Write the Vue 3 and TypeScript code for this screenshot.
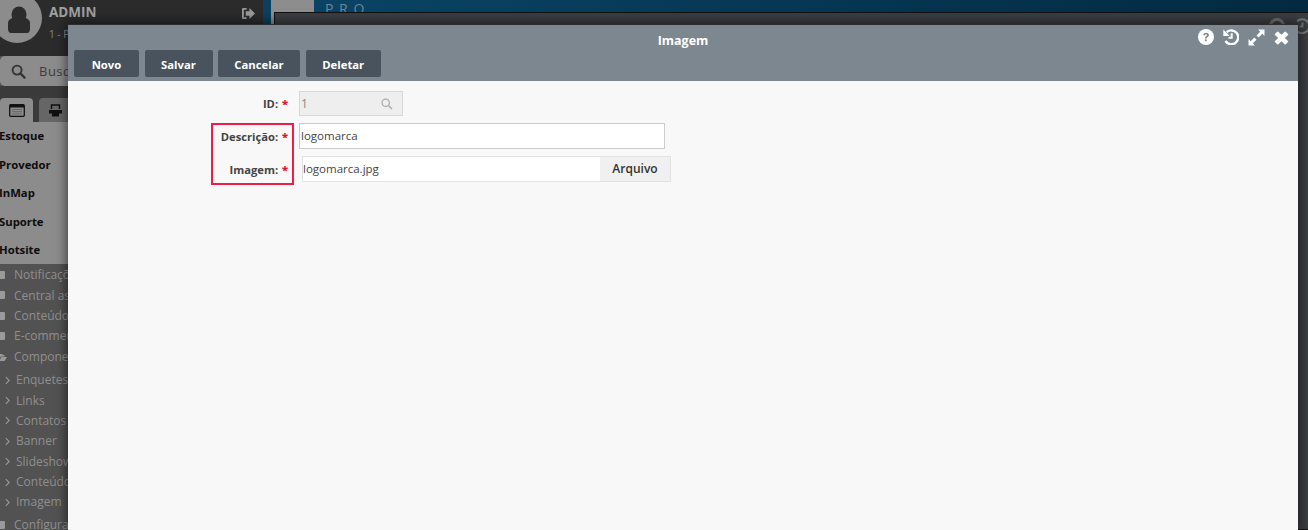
<script setup lang="ts">
const tools = ['Novo', 'Salvar', 'Cancelar', 'Deletar']
const sections = ['Estoque', 'Provedor', 'InMap', 'Suporte', 'Hotsite']
const topItems = ['Notificações', 'Central as', 'Conteúdo', 'E-commerce']
const subItems = ['Enquetes', 'Links', 'Contatos', 'Banner', 'Slideshow', 'Conteúdo', 'Imagem']
</script>

<template>
  <div class="page">
    <aside class="sidebar">
      <div class="profile">
        <svg class="avatar" viewBox="0 0 42 44" width="42" height="44">
          <circle cx="17" cy="18" r="25" fill="#8c8c8c" />
          <ellipse cx="19" cy="14.500" rx="7.500" ry="8" fill="#2c2c2c" />
          <path d="M8 29v-6c0-3 3-5 6-5h10c3 0 6 2 6 5v6c0 2-1 4-3 4H11c-2 0-3-2-3-4z" fill="#2c2c2c" />
        </svg>
        <div class="who">
          <strong>ADMIN</strong>
          <span>1 - Provedor</span>
        </div>
        <svg class="logout" viewBox="0 0 16 14" width="15" height="13">
          <path d="M6 1H2.500C1.500 1 1 1.700 1 2.500v9C1 12.300 1.500 13 2.500 13H6v-2H3V3h3z" fill="#9a9a9a" />
          <path d="M5 4.500h4V1l6 6-6 6V9.500H5z" fill="#9a9a9a" />
        </svg>
      </div>
      <div class="search">
        <svg viewBox="0 0 16 16" width="15" height="15">
          <circle cx="6.500" cy="6.500" r="4.800" fill="none" stroke="#333" stroke-width="2" />
          <path d="M10 10l4.500 4.500" stroke="#333" stroke-width="2.400" stroke-linecap="round" />
        </svg>
        <span>Busque</span>
      </div>
      <div class="tabs">
        <div class="tab active">
          <svg viewBox="0 0 16 13" width="16" height="13">
            <rect x="0.700" y="0.700" width="14.600" height="11.600" rx="1" fill="#8c8c8c" stroke="#111" stroke-width="1.300" />
            <rect x="1" y="1" width="14" height="2.500" fill="#111" />
            <path d="M3 5.500h10M3 7.700h10M3 9.900h10" stroke="#666" stroke-width="1" />
          </svg>
        </div>
        <div class="tab">
          <svg viewBox="0 0 15 13" width="15" height="13">
            <path d="M3.500 5V1h8v4" fill="none" stroke="#111" stroke-width="1.500" />
            <path d="M1 6h13v3.500H1zM4 9h7v3.500H4z" fill="#111" />
          </svg>
        </div>
      </div>
      <div class="sections">
        <div v-for="s in sections" :key="s" class="section">{{ s }}</div>
      </div>
      <ul class="tree">
        <li v-for="t in topItems" :key="t" class="node"><i class="sq"></i>{{ t }}</li>
        <li class="node folder">
          <svg class="open" viewBox="0 0 8 7" width="8" height="7"><path d="M0 1.500C0 .500.500 0 1 0h2l1 1h1.500v1.500H2L0 5.500zM2.500 3H8L5.500 7H0z" fill="#9a9a9a" /></svg>
          <span>Componentes</span>
        </li>
        <li v-for="s in subItems" :key="s" class="sub">
          <svg viewBox="0 0 6 10" width="5" height="9"><path d="M1 1l4 4-4 4" fill="none" stroke="#999" stroke-width="1.300" /></svg>
          <span>{{ s }}</span>
        </li>
        <li class="node last"><i class="sq"></i>Configurações</li>
      </ul>
    </aside>

    <main class="back">
      <div class="stripe"></div>
      <div class="white"></div>
      <div class="brand">P.R.O.</div>
      <div class="backwin">
        <svg viewBox="0 0 16 16" width="16" height="16">
          <circle cx="8" cy="8" r="6.500" fill="none" stroke="#6e6e6e" stroke-width="3" />
        </svg>
        <svg viewBox="0 0 16 16" width="16" height="16">
          <path d="M3.200 3.200A7 7 0 1 1 2 11.500" fill="none" stroke="#777" stroke-width="2" />
          <path d="M8.500 4.500v4H5.500" fill="none" stroke="#777" stroke-width="1.800" />
        </svg>
      </div>
    </main>

    <section class="modal">
      <header class="head">
        <div class="title">Imagem</div>
        <div class="controls">
          <svg viewBox="0 0 16 16" width="16" height="16">
            <circle cx="8" cy="8" r="8" fill="#fff" />
            <path d="M5.300 6.200C5.400 4.600 6.600 3.800 8.100 3.800c1.600 0 2.800.9 2.800 2.300 0 1.200-.7 1.700-1.500 2.200-.6.400-.8.600-.8 1.200H6.900c0-1.200.4-1.800 1.200-2.300.6-.4 1-.6 1-1.100 0-.5-.4-.8-1-.8-.7 0-1.100.4-1.200 1z" fill="#7d8790" />
            <rect x="6.900" y="10.400" width="1.800" height="1.800" fill="#7d8790" />
          </svg>
          <svg viewBox="0 0 16 16" width="16" height="16">
            <path d="M3.700 3.200A6.900 6.900 0 1 1 2.500 12" fill="none" stroke="#fff" stroke-width="2.400" />
            <path d="M0.300 0.500v6.500h6.500z" fill="#fff" />
            <path d="M8.700 4.200v4.600H5.500" fill="none" stroke="#fff" stroke-width="2" />
          </svg>
          <svg viewBox="0 0 16 16" width="17" height="17">
            <path d="M9.500 0.500h6V6.500L13.500 4.500 10 8 8 6 11.500 2.500zM6.500 15.500H0.500V9.500L2.500 11.500 6 8 8 10 4.500 13.500z" fill="#fff" />
          </svg>
          <svg class="close" viewBox="0 0 15 14" width="15" height="14">
            <path d="M1.500 3.500L3.800 1.200 7.500 4.900 11.200 1.200 13.500 3.500 9.800 7 13.500 10.500 11.200 12.800 7.500 9.100 3.800 12.800 1.500 10.500 5.200 7z" fill="#fff" stroke="#fff" stroke-width="1.500" stroke-linejoin="round" />
          </svg>
        </div>
        <div class="toolbar">
          <button v-for="t in tools" :key="t" class="tool" type="button">{{ t }}</button>
        </div>
      </header>
      <div class="body">
        <div class="row id-row">
          <label class="label">ID: <b>*</b></label>
          <div class="id-field">
            <span>1</span>
            <svg viewBox="0 0 14 14" width="12" height="12">
              <circle cx="5.500" cy="5.500" r="4.300" fill="none" stroke="#aaa" stroke-width="1.400" />
              <path d="M8.800 8.800l4 4" stroke="#aaa" stroke-width="1.800" />
            </svg>
          </div>
        </div>
        <div class="row desc-row">
          <label class="label">Descrição: <b>*</b></label>
          <div class="text-field">logomarca</div>
        </div>
        <div class="row img-row">
          <label class="label">Imagem: <b>*</b></label>
          <div class="file-field">
            <span class="file-name">logomarca.jpg</span>
            <span class="file-btn">Arquivo</span>
          </div>
        </div>
        <div class="highlight"></div>
      </div>
    </section>
  </div>
</template>

<style>
html, body { margin: 0; background: #f8f8f8; overflow: hidden; }
</style>

<style scoped>
.page {
  position: relative;
  display: flex;
  width: 1308px;
  height: 530px;
  overflow: hidden;
  font-family: "Open Sans", "Liberation Sans", sans-serif;
}
.sidebar {
  width: 263px;
  flex: none;
  background: #525252;
  display: flex;
  flex-direction: column;
  color: #999;
}
.profile {
  height: 56px;
  flex: none;
  background: #2b2b2b;
  display: flex;
  position: relative;
}
.avatar { flex: none; }
.who { margin-left: 7px; display: flex; flex-direction: column; }
.who strong { font-size: 13.500px; line-height: 19px; margin-top: 3px; color: #a0a0a0; }
.who span { font-size: 10px; line-height: 14px; margin-top: 5px; color: #8a8a8a; }
.logout { position: absolute; left: 241px; top: 7px; }
.search {
  height: 30px;
  flex: none;
  background: #8c8c8c;
  border-radius: 5px 0 0 5px;
  display: flex;
  align-items: center;
  gap: 13px;
  padding-left: 11px;
  font-size: 13px;
  letter-spacing: .5px;
  color: #3c3c3c;
}
.tabs {
  height: 36px;
  flex: none;
  background: #3a3a3a;
  display: flex;
  gap: 6px;
  align-items: flex-end;
}
.tab {
  width: 33px;
  height: 24px;
  box-sizing: border-box;
  padding-top: 6px;
  border-radius: 4px 4px 0 0;
  background: #666;
  display: flex;
  justify-content: center;
}
.tab.active { background: #8c8c8c; }
.sections {
  background: #8c8c8c;
  flex: none;
  height: 142px;
}
.section {
  height: 28.600px;
  line-height: 27px;
  font-size: 11.300px;
  font-weight: 700;
  color: #0d0d0d;
  margin-left: -1px;
}
.tree {
  list-style: none;
  margin: 0;
  padding: 1px 0 0;
  font-size: 12px;
  color: #8f8f8f;
}
.node {
  height: 20.400px;
  line-height: 20px;
  display: flex;
  align-items: center;
  padding-left: 14px;
  position: relative;
}
.sq {
  position: absolute;
  left: -2px;
  top: 6px;
  width: 7px;
  height: 8px;
  background: #9a9a9a;
  border-radius: 1px;
}
.open { position: absolute; left: -1px; top: 7px; }
.folder { margin-bottom: 3px; }
.last { margin-top: 2px; }
.sub {
  height: 20.400px;
  line-height: 20px;
  display: flex;
  align-items: center;
  gap: 6px;
  padding-left: 5px;
}
.back { flex: 1; position: relative; background: linear-gradient(90deg, #0a4567, #032a42); }
.stripe { position: absolute; left: 0; top: 0; width: 8px; height: 100%; background: #0b4060; }
.white { position: absolute; left: 8px; top: 0; width: 43px; height: 24px; background: #8d8d8d; }
.brand { position: absolute; left: 62px; top: 2px; color: #6f8494; font-size: 14px; letter-spacing: 1px; line-height: 14px; }
.backwin {
  position: absolute;
  left: 11px;
  right: 0;
  top: 12px;
  bottom: 0;
  box-sizing: border-box;
  background: #3a3d41;
  border: 1px solid #111;
  border-right: 0;
  display: flex;
  justify-content: flex-end;
  gap: 9px;
  padding: 5px 0 0;
  margin-right: -2px;
}
.modal {
  position: absolute;
  left: 68px;
  top: 24px;
  width: 1230px;
  height: 506px;
  background: #f8f8f8;
  box-shadow: 0 0 10px 2px rgba(0, 0, 0, .5);
  display: flex;
  flex-direction: column;
}
.head {
  height: 57px;
  flex: none;
  background: #7d8790;
  position: relative;
  border-top: 1px solid #2a2d30;
  box-sizing: border-box;
}
.title {
  text-align: center;
  color: #fff;
  font-size: 12.500px;
  font-weight: 700;
  line-height: 31px;
}
.controls {
  position: absolute;
  right: 9px;
  top: 4px;
  display: flex;
  gap: 9px;
  align-items: flex-start;
}
.close { margin-top: 2px; }
.toolbar { display: flex; gap: 5.500px; padding-left: 6px; margin-top: -6px; }
.tool {
  height: 27px;
  border: 0;
  border-radius: 2px;
  background: #49535d;
  color: #fff;
  font-family: inherit;
  font-size: 11.300px;
  font-weight: 700;
  padding: 1px 0 0;
  width: 65px;
}
.tool:nth-child(2) { width: 68px; }
.tool:nth-child(3) { width: 82px; }
.tool:nth-child(4) { width: 75.500px; }
.body { position: relative; flex: 1; padding-top: 10px; box-sizing: border-box; }
.row { display: flex; align-items: center; }
.label {
  width: 220px;
  flex: none;
  text-align: right;
  font-size: 11.200px;
  font-weight: 700;
  color: #444;
}
.label b { color: #e8112d; margin-left: 1px; }
.id-row { height: 25px; }
.desc-row { margin-top: 7px; height: 26px; }
.img-row { margin-top: 7px; height: 26px; }
.id-field {
  margin-left: 11px;
  width: 104px;
  height: 25px;
  box-sizing: border-box;
  border: 1px solid #d8d8d8;
  background: #eee;
  display: flex;
  align-items: center;
  justify-content: space-between;
  padding: 0 9px 0 1px;
  font-size: 12px;
  color: #888;
}
.text-field {
  margin-left: 11px;
  width: 366px;
  height: 26px;
  box-sizing: border-box;
  border: 1px solid #ccc;
  background: #fff;
  font-size: 11.500px;
  line-height: 24px;
  padding-left: 1px;
  color: #444;
}
.file-field {
  margin-left: 14px;
  width: 369px;
  height: 26px;
  box-sizing: border-box;
  border: 1px solid #e2e2e2;
  background: #fff;
  display: flex;
  font-size: 11.500px;
  line-height: 24px;
}
.file-name { flex: 1; color: #444; }
.file-btn {
  width: 70px;
  background: #f0f0f0;
  text-align: center;
  font-size: 12px;
  font-weight: 600;
  color: #333;
}
.highlight {
  position: absolute;
  left: 143px;
  top: 42px;
  border: 2px solid #ef1c47;
  pointer-events: none;
  width: 79px;
  height: 58px;
}
</style>
